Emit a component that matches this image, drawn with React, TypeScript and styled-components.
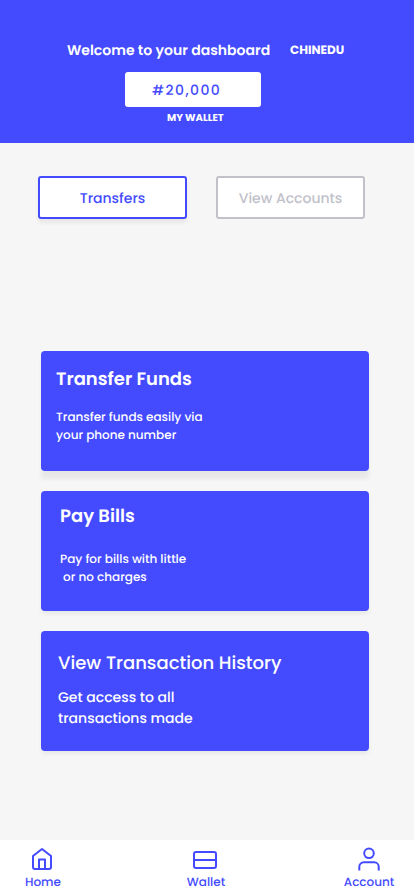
import React from "react";
import styled, { createGlobalStyle } from "styled-components";

const blue = "#444bff";
const muted = "#c1c1ca";

const GlobalStyle = createGlobalStyle`
  *, *::before, *::after { box-sizing: border-box; }
  body {
    margin: 0;
    background: #f6f6f6;
    font-family: Poppins, Inter, sans-serif;
    text-rendering: geometricPrecision;
  }
  h1, h2, p { margin: 0; }
  button { font-family: inherit; text-rendering: inherit; }
`;

const Screen = styled.div`
  display: flex;
  flex-direction: column;
  width: 414px;
  height: 896px;
  overflow: hidden;
`;

const Header = styled.header`
  display: flex;
  flex-direction: column;
  height: 143px;
  padding-top: 40px;
  background: ${blue};
  color: #fff;
`;

const Greeting = styled.div`
  display: flex;
  align-items: center;
  height: 20px;
  padding-left: 67px;
`;

const Welcome = styled.h1`
  width: 223px;
  font-size: 14px;
  font-weight: 600;
  line-height: 20px;
  white-space: nowrap;
`;

const UserName = styled.span`
  font-size: 12px;
  font-weight: 700;
  line-height: 20px;
  padding-top: 1px;
`;

const Balance = styled.div`
  width: 136px;
  height: 35px;
  margin: 12px 0 0 125px;
  padding-left: 27px;
  border-radius: 3px;
  background: #fff;
  color: ${blue};
  font-size: 14px;
  font-weight: 500;
  line-height: 36px;
  letter-spacing: 1.4px;
`;

const WalletLabel = styled.span`
  margin: 3px 0 0 167px;
  font-size: 10px;
  font-weight: 700;
  line-height: 15px;
`;

const Tabs = styled.div`
  display: flex;
  gap: 29px;
  padding: 33px 0 0 38px;
`;

const Tab = styled.button<{ $active?: boolean }>`
  width: 149px;
  height: 43px;
  padding: 2px 0 0;
  border: 2px solid ${(p) => (p.$active ? blue : muted)};
  border-radius: 3px;
  background: #fff;
  color: ${(p) => (p.$active ? blue : muted)};
  font-size: 14px;
  font-weight: 500;
  line-height: 37px;
  box-shadow: ${(p) => (p.$active ? "0 4px 4px rgba(0, 0, 0, 0.06)" : "none")};
`;

const Cards = styled.main`
  display: flex;
  flex: 1;
  flex-direction: column;
  gap: 20px;
  padding: 132px 45px 0 41px;
`;

const Card = styled.section<{ $top: number; $left: number; $raised?: boolean }>`
  height: 120px;
  padding: ${(p) => p.$top}px 0 0 ${(p) => p.$left}px;
  border-radius: 4px;
  background: ${blue};
  color: #fff;
  box-shadow: ${(p) =>
    p.$raised ? "0 8px 4px rgba(0, 0, 0, 0.06)" : "0 3px 4px rgba(0, 0, 0, 0.06)"};
`;

const CardTitle = styled.h2<{ $weight: number }>`
  font-size: 18px;
  font-weight: ${(p) => p.$weight};
  line-height: 26px;
`;

const CardText = styled.p<{ $gap: number; $large?: boolean }>`
  margin-top: ${(p) => p.$gap}px;
  font-size: ${(p) => (p.$large ? 14 : 12)}px;
  font-weight: 500;
  line-height: ${(p) => (p.$large ? 21 : 18)}px;
  white-space: pre;
`;

const NavBar = styled.nav`
  display: grid;
  grid-template-columns: 162px 157px auto;
  height: 56px;
  padding: 6px 0 0 25px;
  background: #fff;
`;

const NavItem = styled.a<{ $width: number }>`
  display: flex;
  flex-direction: column;
  align-items: center;
  width: ${(p) => p.$width}px;
  color: ${blue};
  font-size: 12px;
  font-weight: 500;
  line-height: 18px;
  white-space: nowrap;
`;

const Icon = styled.svg`
  display: block;
  flex: none;
  width: 28px;
  height: 28px;
  fill: none;
  stroke: ${blue};
  stroke-width: 2;
  stroke-linejoin: round;
`;

export default function App() {
  return (
    <Screen>
      <GlobalStyle />
      <Header>
        <Greeting>
          <Welcome>Welcome to your dashboard</Welcome>
          <UserName>CHINEDU</UserName>
        </Greeting>
        <Balance>#20,000</Balance>
        <WalletLabel>MY WALLET</WalletLabel>
      </Header>
      <Tabs>
        <Tab $active>Transfers</Tab>
        <Tab>View Accounts</Tab>
      </Tabs>
      <Cards>
        <Card $top={16} $left={15} $raised>
          <CardTitle $weight={600}>Transfer Funds</CardTitle>
          <CardText $gap={16}>{"Transfer funds easily via\nyour phone number"}</CardText>
        </Card>
        <Card $top={13} $left={19}>
          <CardTitle $weight={600}>Pay Bills</CardTitle>
          <CardText $gap={21}>{"Pay for bills with little\n or no charges"}</CardText>
        </Card>
        <Card $top={20} $left={17}>
          <CardTitle $weight={500}>View Transaction History</CardTitle>
          <CardText $gap={10} $large>
            {"Get access to all\ntransactions made"}
          </CardText>
        </Card>
      </Cards>
      <NavBar>
        <NavItem $width={36}>
          <Icon viewBox="0 0 28 28">
            <path d="M4 10l9-7 9 7v11a2 2 0 0 1-2 2H6a2 2 0 0 1-2-2z" />
            <path d="M10 23V13.5h6V23" />
          </Icon>
          Home
        </NavItem>
        <NavItem $width={38}>
          <Icon viewBox="0 0 28 28">
            <rect x="2" y="6" width="22" height="16" rx="2" />
            <path d="M2 14h22" />
          </Icon>
          Wallet
        </NavItem>
        <NavItem $width={50}>
          <Icon viewBox="0 0 28 28">
            <circle cx="14" cy="7.3" r="4.8" />
            <path d="M4.3 24.6v-3.9a4.4 4.4 0 0 1 4.4-4.4h10.6a4.4 4.4 0 0 1 4.4 4.4v3.9" />
          </Icon>
          Account
        </NavItem>
      </NavBar>
    </Screen>
  );
}
